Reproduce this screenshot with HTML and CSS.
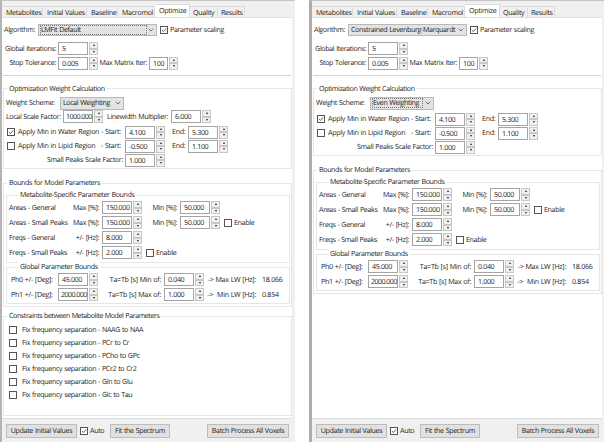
FILE: index.html
```
<!DOCTYPE html>
<html lang="en">
<head>
<meta charset="utf-8">
<title>Fitting options</title>
<link rel="stylesheet" href="styles.css">
</head>
<body>
<main class="screens" id="screens"></main>
<script src="panels.js"></script>
</body>
</html>
```
FILE: panels.js
```
const spin = (value) => `<span class="spin"><span class="field${value.length > 7 ? ' long' : ''}">${value}</span><span class="arrows"><i class="up"></i><i class="down"></i></span></span>`;
const tick = (on) => `<span class="box"><svg viewBox="0 0 8 8">${on ? '<path d="M1.2 4.1 3.2 6 7 1.8"/>' : ''}</svg></span>`;
const check = (text, on) => `<span class="check">${tick(on)}<span>${text}</span></span>`;
const label = (text) => `<span class="label">${text}</span>`;
const end = (text) => `<span class="label end">${text}</span>`;
const combo = (text, cls, focus) => `<span class="combo ${cls}"><span class="choice${focus ? ' focus' : ''}">${text}</span><svg class="chevron" viewBox="0 0 6 4"><path d="M.8.7 3 3 5.2.7"/></svg></span>`;
const row = (cls, ...cells) => `<div class="row ${cls}">${cells.join('')}</div>`;
const group = (cls, title, ...rows) => `<section class="group ${cls}"><h2>${title}</h2>${rows.join('')}</section>`;

const tabs = ['Metabolites', 'Initial Values', 'Baseline', 'Macromol', 'Optimize', 'Quality', 'Results'];
const pairs = ['NAAG to NAA', 'PCr to Cr', 'PCho to GPc', 'PCr2 to Cr2', 'Gln to Glu', 'Glc to Tau'];

const panel = (o) => `
<article class="panel ${o.side}">
  <nav class="tabs">${tabs.map((t) => `<span class="tab${t === 'Optimize' ? ' active' : ''}">${t}</span>`).join('')}</nav>
  <div class="page">
    ${row('algorithm', end('Algorithm:'), combo(o.algorithm, 'wide', o.local), check('Parameter scaling', true))}
    ${row('iterations', end('Global Iterations:'), spin('5'))}
    ${row('tolerance', end('Stop Tolerance:'), spin('0.005'), end('Max Matrix Iter:'), spin('100'))}
    <hr>
    ${group('weights', 'Optimization Weight Calculation',
      row('scheme', label('Weight Scheme:'), combo(o.scheme, 'mid', !o.local)),
      o.local ? row('local', label('Local Scale Factor:'), spin('1000.000'), end('Linewidth Multiplier:'), spin('6.000')) : '',
      row('region water', check('Apply Min in Water Region - Start:', true), spin('4.100'), label('End:'), spin('5.300')),
      row('region', check('Apply Min in Lipid Region &nbsp; - Start:', false), spin('-0.500'), label('End:'), spin('1.100')),
      row('region', end('Small Peaks Scale Factor:'), spin('1.000')))}
    ${group('bounds', 'Bounds for Model Parameters',
      group('specific', 'Metabolite-Specific Parameter Bounds',
        row('bound', label('Areas - General'), end('Max [%]:'), spin('150.000'), end('Min [%]:'), spin('50.000')),
        row('bound', label('Areas - Small Peaks'), end('Max [%]:'), spin('150.000'), end('Min [%]:'), spin('50.000'), check('Enable', false)),
        row('bound', label('Freqs - General'), end('+/- [Hz]:'), spin('8.000')),
        row('bound', label('Freqs - Small Peaks'), end('+/- [Hz]:'), spin('2.000'), check('Enable', false))),
      group('global', 'Global Parameter Bounds',
        row('phase', label('Ph0 +/- [Deg]:'), spin('45.000'), end('Ta=Tb [s] Min of:'), spin('0.040'), end('-&gt; Max LW [Hz]:'), label('18.066')),
        row('phase', label('Ph1 +/- [Deg]:'), spin('2000.000'), end('Ta=Tb [s] Max of:'), spin('1.000'), end('-&gt; &nbsp;Min LW [Hz]:'), label('0.854'))))}
    ${o.local ? group('constraints', 'Constraints between Metabolite Model Parameters',
      pairs.map((p) => row('pair', check(`Fix frequency separation - ${p}`, false))).join('')) : ''}
  </div>
  <footer class="actions">
    <span class="button update">Update Initial Values</span>
    ${check('Auto', true)}
    <span class="button fit">Fit the Spectrum</span>
    <span class="button batch">Batch Process All Voxels</span>
  </footer>
</article>`;

document.getElementById('screens').innerHTML =
  panel({ side: 'left', local: true, algorithm: 'LMFit Default', scheme: 'Local Weighting' }) +
  panel({ side: 'right', local: false, algorithm: 'Constrained Levenburg-Marquardt', scheme: 'Even Weighting' });
```
FILE: styles.css
```
* { box-sizing: border-box; }
body {
  margin: 0;
  background: #fff;
  color: #1c1c1c;
  font: 7.1px/10px "Open Sans", "Noto Sans", sans-serif;
  letter-spacing: -0.34px;
  word-spacing: 0.4px;
  text-rendering: geometricPrecision;
  white-space: nowrap;
}
.screens { display: flex; gap: 14px; width: 607px; height: 442px; overflow: hidden; }
.panel {
  display: flex;
  flex-direction: column;
  width: 295px;
  height: 442px;
  background: #f0f0f0;
  border-left: 2px solid #b4b4b4;
  border-top: 1px solid #c4c4c4;
}
.panel.right { border-left: 3px solid #b3aba3; }

.tabs { display: flex; align-items: flex-end; height: 16px; flex: none; }
.tab {
  height: 11px;
  border: 1px solid #dcdcdc;
  border-width: 1px 1px 0 0;
  padding-left: 4px;
  line-height: 12px;
  width: 41px;
  letter-spacing: -0.3px;
}
.tab:nth-child(2) { width: 44px; }
.tab:nth-child(3) { width: 31px; }
.tab:nth-child(4) { width: 37px; }
.tab:nth-child(5) { width: 35px; }
.tab:nth-child(6) { width: 28px; padding-left: 3px; }
.tab:nth-child(7) { width: 27px; padding-left: 3px; }
.tab.active { height: 13px; background: #fff; }

.page {
  flex: none;
  width: 290px;
  height: 402px;
  background: #fff;
  border-top: 1px solid #e2e2e2;
  border-bottom: 1px solid #dedede;
}
.row { display: grid; align-items: center; height: 14px; }
.label { line-height: 10px; }
.end { justify-self: end; padding-right: 3px; }

.algorithm { grid-template-columns: 36px 122px auto; margin-top: 5px; }
.iterations { grid-template-columns: 56px auto; margin-top: 5px; height: 13px; }
.tolerance { grid-template-columns: 56px 40px 51px auto; margin-top: 1px; }
.tolerance .spin:last-child { width: 29px; }
.iterations .end, .tolerance .end { padding-right: 2px; }
hr { margin: 5px 0 0 1px; border: 0; border-top: 1px solid #d4d4d4; width: 288px; }

.group { border: 1px solid #e6e6e6; margin-left: 1px; width: 289px; }
h2 {
  margin: -6px 0 0 3px;
  padding: 0 2px;
  width: fit-content;
  font: inherit;
  letter-spacing: -0.36px;
  background: #fff;
}
.constraints h2 { letter-spacing: -0.42px; }
.weights { margin-top: 12px; height: 81px; }
.right .weights { height: 68px; }
.weights > h2 { line-height: 12px; margin-bottom: -2px; }
.scheme { grid-template-columns: 54px auto; margin: 3px 0 0 2px; }
.local { grid-template-columns: 57px 39px 69px auto; margin-left: 2px; height: 13px; }
.region { grid-template-columns: 118px 47px 16px auto; margin-left: 3px; letter-spacing: -0.3px; }
.region .label.end { padding-right: 2px; }
.water { margin-top: 2px; }

.bounds { margin-top: 14px; height: 124px; }
.specific, .global { margin-left: 2px; width: 284px; }
.specific h2, .global h2 { margin-left: 11px; }
.specific { margin-top: 7px; height: 68px; }
.bound { grid-template-columns: 47px 46px 44px 34px 44px auto; margin-left: 2px; height: 15px; }
.specific h2 + .row { margin-top: 0; }
.global { margin-top: 4px; height: 37px; }
.phase { grid-template-columns: 47px 40px 66px 40px 55px auto; margin-left: 4px; height: 15px; letter-spacing: -0.28px; }
.phase .label:last-child { padding-left: 3px; }

.constraints { margin-top: 9px; height: 100px; }
.pair { margin-left: 5px; height: 13px; }
.constraints h2 + .row { margin-top: 2px; }
.pair .check { gap: 5px; }

.spin { display: flex; width: 40px; height: 13px; }
.field {
  flex: 1;
  border: 1px solid #a4a4a4;
  background: #fff;
  line-height: 12px;
  padding-left: 3px;
  letter-spacing: -0.36px;
}
.field.long { padding-left: 2px; letter-spacing: -0.58px; }
.arrows { display: flex; flex-direction: column; width: 10px; padding-left: 1px; }
.arrows i {
  display: flex;
  align-items: center;
  justify-content: center;
  flex: 1;
  border: 1px solid #c8c8c8;
  background: #f0f0f0;
}
.arrows i::before { content: ""; border: 1.5px solid transparent; }
.arrows .up::before { border-top: 0; border-bottom: 2px solid #222; }
.arrows .down::before { border-bottom: 0; border-top: 2px solid #222; }

.check { display: flex; align-items: center; gap: 2px; }
.region .check { gap: 3px; }
.box { width: 8px; height: 8px; border: 1px solid #555; background: #fff; display: flex; }
.box svg { width: 6px; height: 6px; overflow: visible; }
.box path { fill: none; stroke: #222; stroke-width: 1; }

.combo {
  display: flex;
  align-items: center;
  justify-content: space-between;
  height: 12px;
  padding: 0 2px 0 1px;
  background: #e3e3e3;
  border: 1px solid #b8b8b8;
}
.combo.wide { width: 119px; }
.combo.mid { width: 64px; height: 13px; }
.choice { flex: none; line-height: 9px; border: 1px solid transparent; height: 10px; letter-spacing: -0.36px; }
.choice.focus { border: 1px dotted #777; }
.wide .focus { width: 107px; }
.mid .focus { width: 51px; }
.chevron { width: 6px; height: 4px; flex: none; }
.chevron path { fill: none; stroke: #555; stroke-width: .8; }

.actions { display: flex; align-items: center; margin: 5px 0 0 4px; height: 14px; }
.button {
  height: 14px;
  border: 1px solid #bdbdbd;
  background: #e1e1e1;
  text-align: center;
  line-height: 12px;
}
.update { width: 71px; margin-right: 3px; }
.fit { width: 60px; margin-left: 5px; }
.actions .check { width: 25px; }
.batch { width: 82px; margin-left: 37px; }
```
